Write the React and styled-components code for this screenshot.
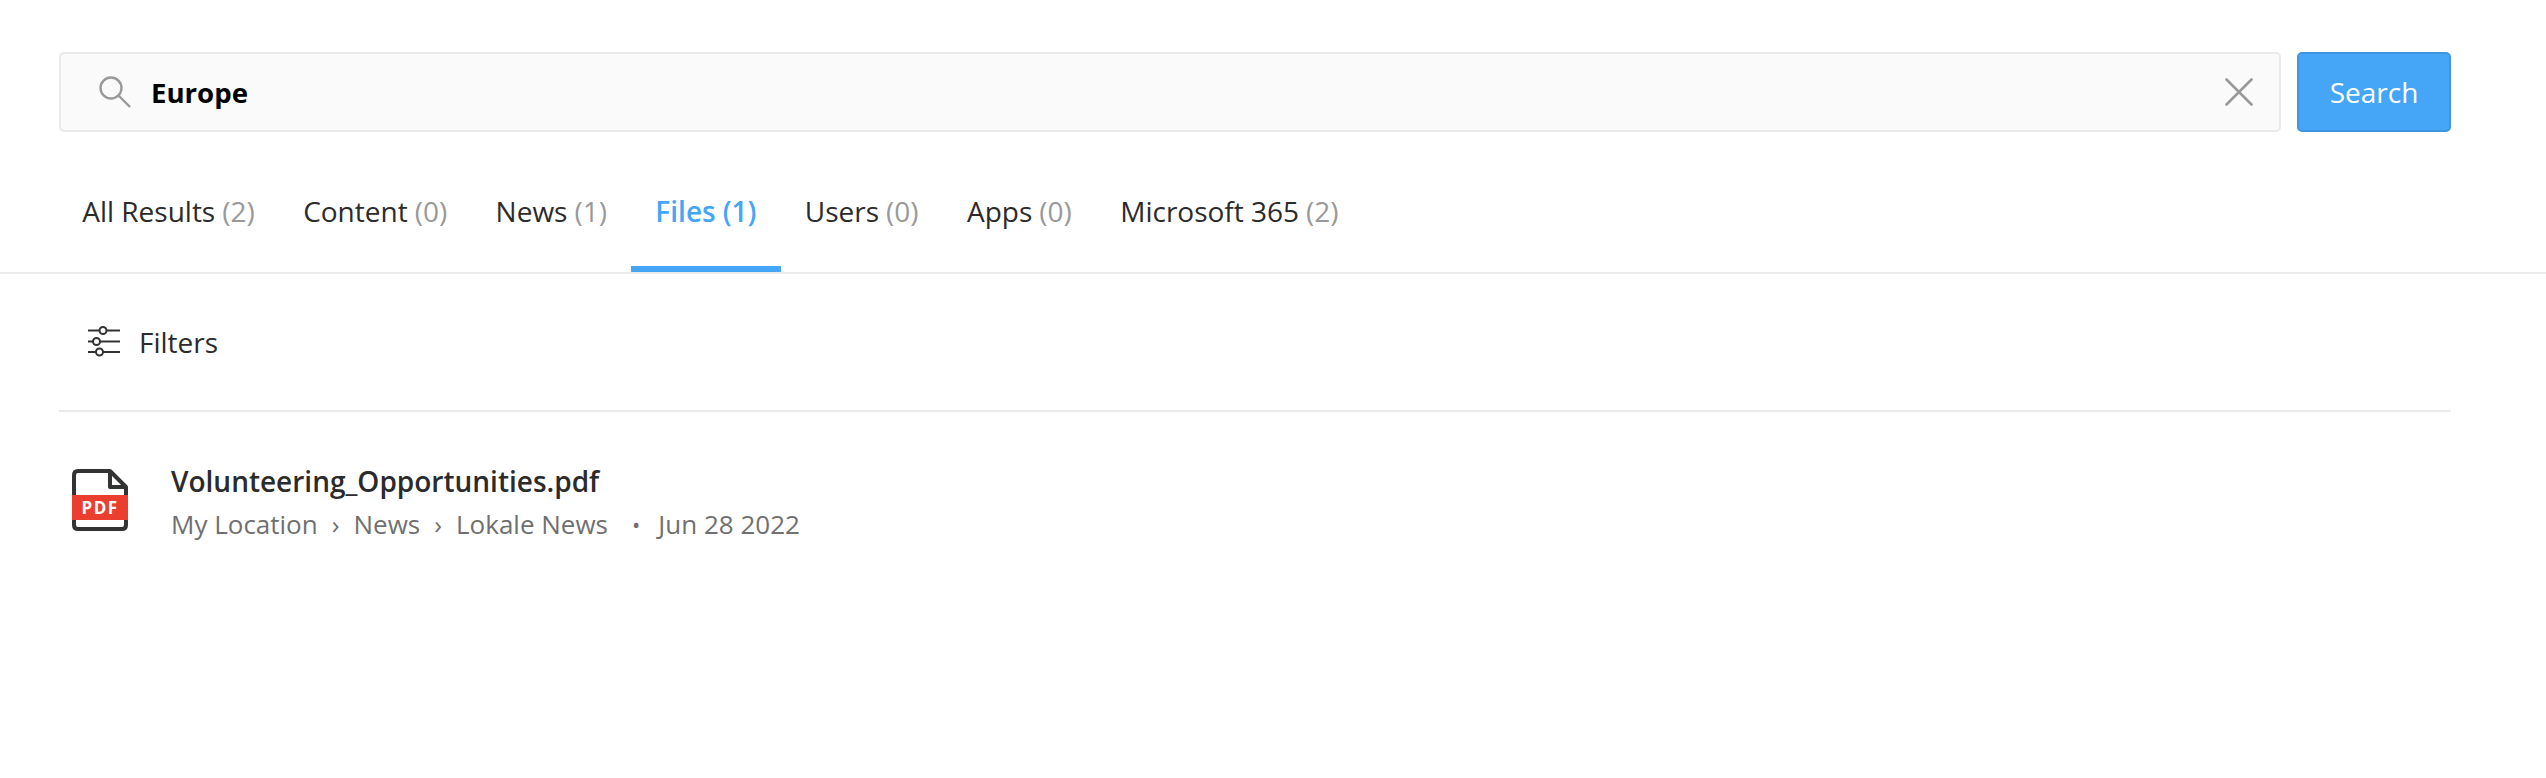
import React from "react"
import styled, {createGlobalStyle} from "styled-components"

const tabs = [
  {label: "All Results", count: 2},
  {label: "Content", count: 0},
  {label: "News", count: 1},
  {label: "Files", count: 1, active: true},
  {label: "Users", count: 0},
  {label: "Apps", count: 0},
  {label: "Microsoft 365", count: 2},
]

const App = () => {
  return (
    <Page>
      <GlobalStyle />
      <SearchRow>
        <SearchBox>
          <SearchIcon viewBox="0 0 32 32">
            <circle cx="12" cy="12" r="10.5" />
            <path d="M19.5 19.5 L31 31" />
          </SearchIcon>
          <Query>Europe</Query>
          <ClearIcon viewBox="0 0 28 28">
            <path d="M1.5 1.5 L26.5 26.5 M26.5 1.5 L1.5 26.5" />
          </ClearIcon>
        </SearchBox>
        <SearchButton>Search</SearchButton>
      </SearchRow>
      <TabBar>
        {tabs.map((tab) => (
          <Tab key={tab.label} $active={tab.active}>
            {tab.label} <Count $active={tab.active}>({tab.count})</Count>
          </Tab>
        ))}
      </TabBar>
      <Body>
        <FilterRow>
          <FilterIcon viewBox="0 0 34 32">
            <path d="M1 4.5 H12.5 M19.5 4.5 H33 M1 15.5 H6 M13 15.5 H33 M1 26 H9 M16 26 H33" />
            <circle cx="16" cy="4.5" r="3.5" />
            <circle cx="9.5" cy="15.5" r="3.5" />
            <circle cx="12.5" cy="26" r="3.5" />
          </FilterIcon>
          <FilterLabel>Filters</FilterLabel>
        </FilterRow>
        <Result>
          <PdfIcon viewBox="0 0 56 62">
            <path className="outline" d="M38 2 H6 Q2 2 2 6 V56 Q2 60 6 60 H50 Q54 60 54 56 V18 L38 2 Z" />
            <path className="outline" d="M38 2 V18 H54" />
            <rect className="band" x="0" y="26" width="56" height="25" />
            <text x="28" y="45" textAnchor="middle">PDF</text>
          </PdfIcon>
          <ResultText>
            <ResultTitle>Volunteering_Opportunities.pdf</ResultTitle>
            <Meta>
              <span>My Location</span>
              <Sep>›</Sep>
              <span>News</span>
              <Sep>›</Sep>
              <span>Lokale News</span>
              <Dot>•</Dot>
              <span>Jun 28 2022</span>
            </Meta>
          </ResultText>
        </Result>
      </Body>
    </Page>
  )
}

export default App

const GlobalStyle = createGlobalStyle`
  html, body {
    margin: 0;
    background: #fff;
    font-family: "Open Sans", "Liberation Sans", sans-serif;
  }
`
const Page = styled.div`
  width: 2546px;
  height: 778px;
  box-sizing: border-box;
  padding-top: 52px;
  overflow: hidden;
`
const SearchRow = styled.div`
  display: flex;
  gap: 16px;
  padding: 0 95px 0 59px;
`
const SearchBox = styled.div`
  flex: 1;
  height: 80px;
  box-sizing: border-box;
  display: flex;
  align-items: center;
  padding: 0 26px 0 38px;
  background: #fafafa;
  border: 2px solid #eaeaea;
  border-radius: 5px;
`
const SearchIcon = styled.svg`
  width: 32px;
  height: 32px;
  fill: none;
  stroke: #999;
  stroke-width: 2.4;
  flex-shrink: 0;
`
const Query = styled.div`
  flex: 1;
  margin-left: 20px;
  font-size: 27.6px;
  font-weight: 700;
  color: #000;
`
const ClearIcon = styled.svg`
  width: 28px;
  height: 28px;
  fill: none;
  stroke: #999;
  stroke-width: 2.6;
  stroke-linecap: round;
`
const SearchButton = styled.button`
  width: 154px;
  height: 80px;
  box-sizing: border-box;
  background: #45a5f6;
  border: 2px solid #3f95e0;
  border-radius: 5px;
  color: #fff;
  font-family: inherit;
  font-size: 28px;
  padding: 0;
`
const TabBar = styled.div`
  display: flex;
  margin-top: 30px;
  padding-left: 58px;
  border-bottom: 2px solid #eaeaea;
`
const Tab = styled.div`
  height: 110px;
  box-sizing: border-box;
  padding: 0 24.2px 6px;
  display: flex;
  align-items: center;
  gap: 7px;
  font-size: 28px;
  font-weight: ${(p) => (p.$active ? 600 : 400)};
  color: ${(p) => (p.$active ? "#45a5f6" : "#2b2b2b")};
  border-bottom: 6px solid ${(p) => (p.$active ? "#45a5f6" : "transparent")};
`
const Count = styled.span`
  color: ${(p) => (p.$active ? "#45a5f6" : "#999")};
`
const Body = styled.div`
  padding: 0 95px 0 59px;
`
const FilterRow = styled.div`
  display: flex;
  align-items: center;
  height: 138px;
  box-sizing: border-box;
  padding-left: 28px;
  gap: 18px;
  border-bottom: 2px solid #eaeaea;
`
const FilterIcon = styled.svg`
  width: 34px;
  height: 32px;
  fill: none;
  stroke: #333;
  stroke-width: 2;
`
const FilterLabel = styled.span`
  font-size: 28px;
  color: #2b2b2b;
`
const Result = styled.div`
  display: flex;
  align-items: flex-start;
  gap: 43px;
  margin-top: 50px;
  padding-left: 13px;
`
const PdfIcon = styled.svg`
  width: 56px;
  height: 62px;
  flex-shrink: 0;
  margin-top: 7px;
  .outline {
    fill: none;
    stroke: #333;
    stroke-width: 4;
    stroke-linejoin: round;
  }
  .band {
    fill: #ea3f2e;
  }
  text {
    fill: #fff;
    font-family: "Open Sans", sans-serif;
    font-size: 17px;
    font-weight: 700;
    letter-spacing: 1.4px;
  }
`
const ResultText = styled.div`
  display: flex;
  flex-direction: column;
  gap: 6px;
`
const ResultTitle = styled.div`
  font-size: 28px;
  font-weight: 600;
  color: #2b2b2b;
`
const Meta = styled.div`
  display: flex;
  font-size: 26px;
  color: #707070;
`
const Sep = styled.span`
  margin: 0 14px;
`
const Dot = styled.span`
  margin: 0 18px 0 24px;
  font-size: 22px;
  align-self: center;
`
